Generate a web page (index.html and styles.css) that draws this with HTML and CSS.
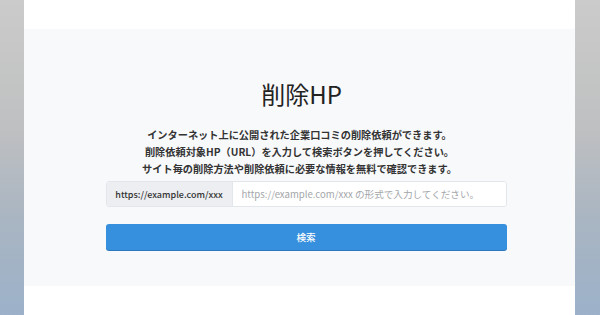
FILE: index.html
```html
<!DOCTYPE html>
<html lang="ja">
<head>
<meta charset="utf-8">
<link rel="stylesheet" href="styles.css">
</head>
<body>
<div class="frame">
  <div class="side"></div>
  <main class="page">
    <div class="top"></div>
    <section class="band">
      <h1 class="title">削除HP</h1>
      <p class="lead">インターネット上に公開された企業口コミの削除依頼ができます。<br>削除依頼対象HP（URL）を入力して検索ボタンを押してください。<br>サイト毎の削除方法や削除依頼に必要な情報を無料で確認できます。</p>
      <form class="form">
        <div class="group">
          <span class="prefix">https://example.com/xxx</span>
          <input class="field" type="text" placeholder="https://example.com/xxx の形式で入力してください。">
        </div>
        <button class="btn" type="button">検索</button>
      </form>
    </section>
    <div class="bottom"></div>
  </main>
  <div class="side"></div>
</div>
</body>
</html>
```
FILE: styles.css
```css
* { box-sizing: border-box; }
html, body { margin: 0; padding: 0; }
body {
  width: 600px;
  height: 315px;
  overflow: hidden;
  font-family: "Noto Sans CJK JP", "Noto Sans", sans-serif;
  background: #fff;
}
.frame {
  display: flex;
  width: 600px;
  height: 315px;
}
.side {
  width: 24px;
  flex: none;
  background: linear-gradient(180deg, #cbcbcb 0%, #bfc0c1 40%, #a9b5c2 70%, #9cb1c9 100%);
}
.side:last-child { width: 25px; }
.page {
  flex: 1;
  display: flex;
  flex-direction: column;
  background: #fff;
}
.top { height: 29px; flex: none; }
.bottom { flex: 1; }
.band {
  height: 257px;
  flex: none;
  background: #f8f9fb;
  display: flex;
  flex-direction: column;
  align-items: center;
  padding-top: 50px;
}
.title {
  margin: 0;
  font-size: 24px;
  line-height: 29px;
  font-weight: 400;
  color: #222;
  transform: translateX(2px);
}
.lead {
  margin: 18px 0 0;
  font-size: 10.2px;
  line-height: 17px;
  font-weight: 700;
  color: #333;
  text-align: center;
}
.form {
  margin: 4px 0 0 13px;
  width: 401px;
  display: flex;
  flex-direction: column;
  gap: 17px;
}
.group {
  display: flex;
  height: 26px;
  border: 1px solid #e3e6ea;
  border-radius: 3px;
  overflow: hidden;
  background: #fff;
}
.prefix {
  width: 126px;
  flex: none;
  background: #eceef1;
  border-right: 1px solid #e3e6ea;
  color: #333;
  font-size: 9px;
  font-weight: 500;
  display: flex;
  align-items: center;
  justify-content: center;
}
.field {
  flex: 1;
  border: 0;
  outline: 0;
  padding: 0 9px;
  font-family: inherit;
  font-size: 9.6px;
  color: #333;
  background: #fff;
}
.field::placeholder { color: #a3a6aa; }
.btn {
  height: 26px;
  border: 0;
  border-radius: 3px;
  background: #3790dd;
  color: #fff;
  font-family: inherit;
  font-size: 9.6px;
  font-weight: 500;
  box-shadow: 0 1px 0 #2b78c0;
}
```
